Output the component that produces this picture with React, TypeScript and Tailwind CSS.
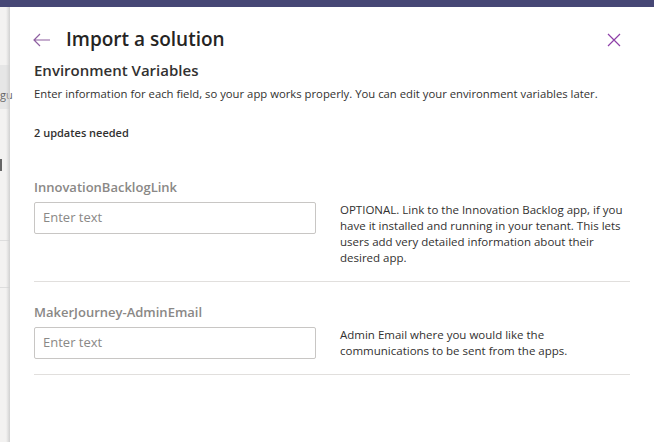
import React from "react";

const font = { fontFamily: '"Open Sans", "Noto Sans", sans-serif' };

function Field({ label, desc }: { label: string; desc: string[] }) {
  return (
    <div className="border-b border-[#e1dfdd] pb-[15px] pt-[0px]">
      <div className="text-[13px] font-semibold leading-[20px] text-[#8a8886]">{label}</div>
      <div className="mt-[5px] flex">
        <div className="flex h-[32px] w-[282px] shrink-0 items-center rounded-[2px] border border-[#c8c6c4] px-[8px] text-[13px] text-[#8a8886]">
          Enter text
        </div>
        <div className="ml-[24px] w-[290px] text-[11.5px] leading-[16px] text-[#323130]">
          {desc.map((d, i) => (
            <div key={i}>{d}</div>
          ))}
        </div>
      </div>
    </div>
  );
}

export default function App() {
  return (
    <div className="relative h-[442px] w-[654px] overflow-hidden bg-white" style={font}>
      <div className="h-[7px] bg-[#464775]" />
      <div className="flex h-[435px]">
        <div className="relative w-[10px] shrink-0 bg-[#f3f2f1]">
          <div className="mt-[58px] h-[44px] bg-[#e6e6e6]" />
          <div className="absolute left-0 top-[82px] text-[11px] leading-none text-[#666]">gu</div>
          <div className="absolute left-0 top-[152px] h-[12px] w-[2px] bg-[#666]" />
          <div className="absolute left-0 top-[233px] h-px w-full bg-[#ddd]" />
          <div className="absolute left-0 top-[280px] h-px w-full bg-[#ddd]" />
          <div className="absolute right-0 top-0 h-full w-[4px] bg-gradient-to-r from-transparent to-[#d0d0d0]" />
        </div>
        <div className="flex-1 pl-[24px] pr-[24px]">
          <div className="flex h-[53px] items-center pt-[12px]">
            <svg width="18" height="14" viewBox="0 0 18 14" className="ml-[-1px]">
              <path d="M7 1 L1 7 L7 13 M1 7 H17" fill="none" stroke="#8e5fa0" strokeWidth="1.2" />
            </svg>
            <div className="ml-[15px] text-[19px] font-semibold leading-none text-[#252423]">Import a solution</div>
            <div className="flex-1" />
            <svg width="14" height="14" viewBox="0 0 14 14" className="mr-[9px]">
              <path d="M1 1 L13 13 M13 1 L1 13" stroke="#8e3fa8" strokeWidth="1.2" />
            </svg>
          </div>
          <div className="text-[15px] font-semibold leading-[20px] text-[#323130]">Environment Variables</div>
          <div className="mt-[6px] text-[11.3px] leading-[16px] text-[#323130]">
            Enter information for each field, so your app works properly. You can edit your environment variables later.
          </div>
          <div className="mt-[23px] text-[11px] font-semibold leading-[16px] text-[#323130]">2 updates needed</div>
          <div className="mt-[36px] w-[596px]">
            <Field
              label="InnovationBacklogLink"
              desc={[
                "OPTIONAL. Link to the Innovation Backlog app, if you",
                "have it installed and running in your tenant. This lets",
                "users add very detailed information about their",
                "desired app.",
              ]}
            />
            <div className="pt-[20px]">
              <Field
                label="MakerJourney-AdminEmail"
                desc={["Admin Email where you would like the", "communications to be sent from the apps."]}
              />
            </div>
          </div>
        </div>
      </div>
    </div>
  );
}
